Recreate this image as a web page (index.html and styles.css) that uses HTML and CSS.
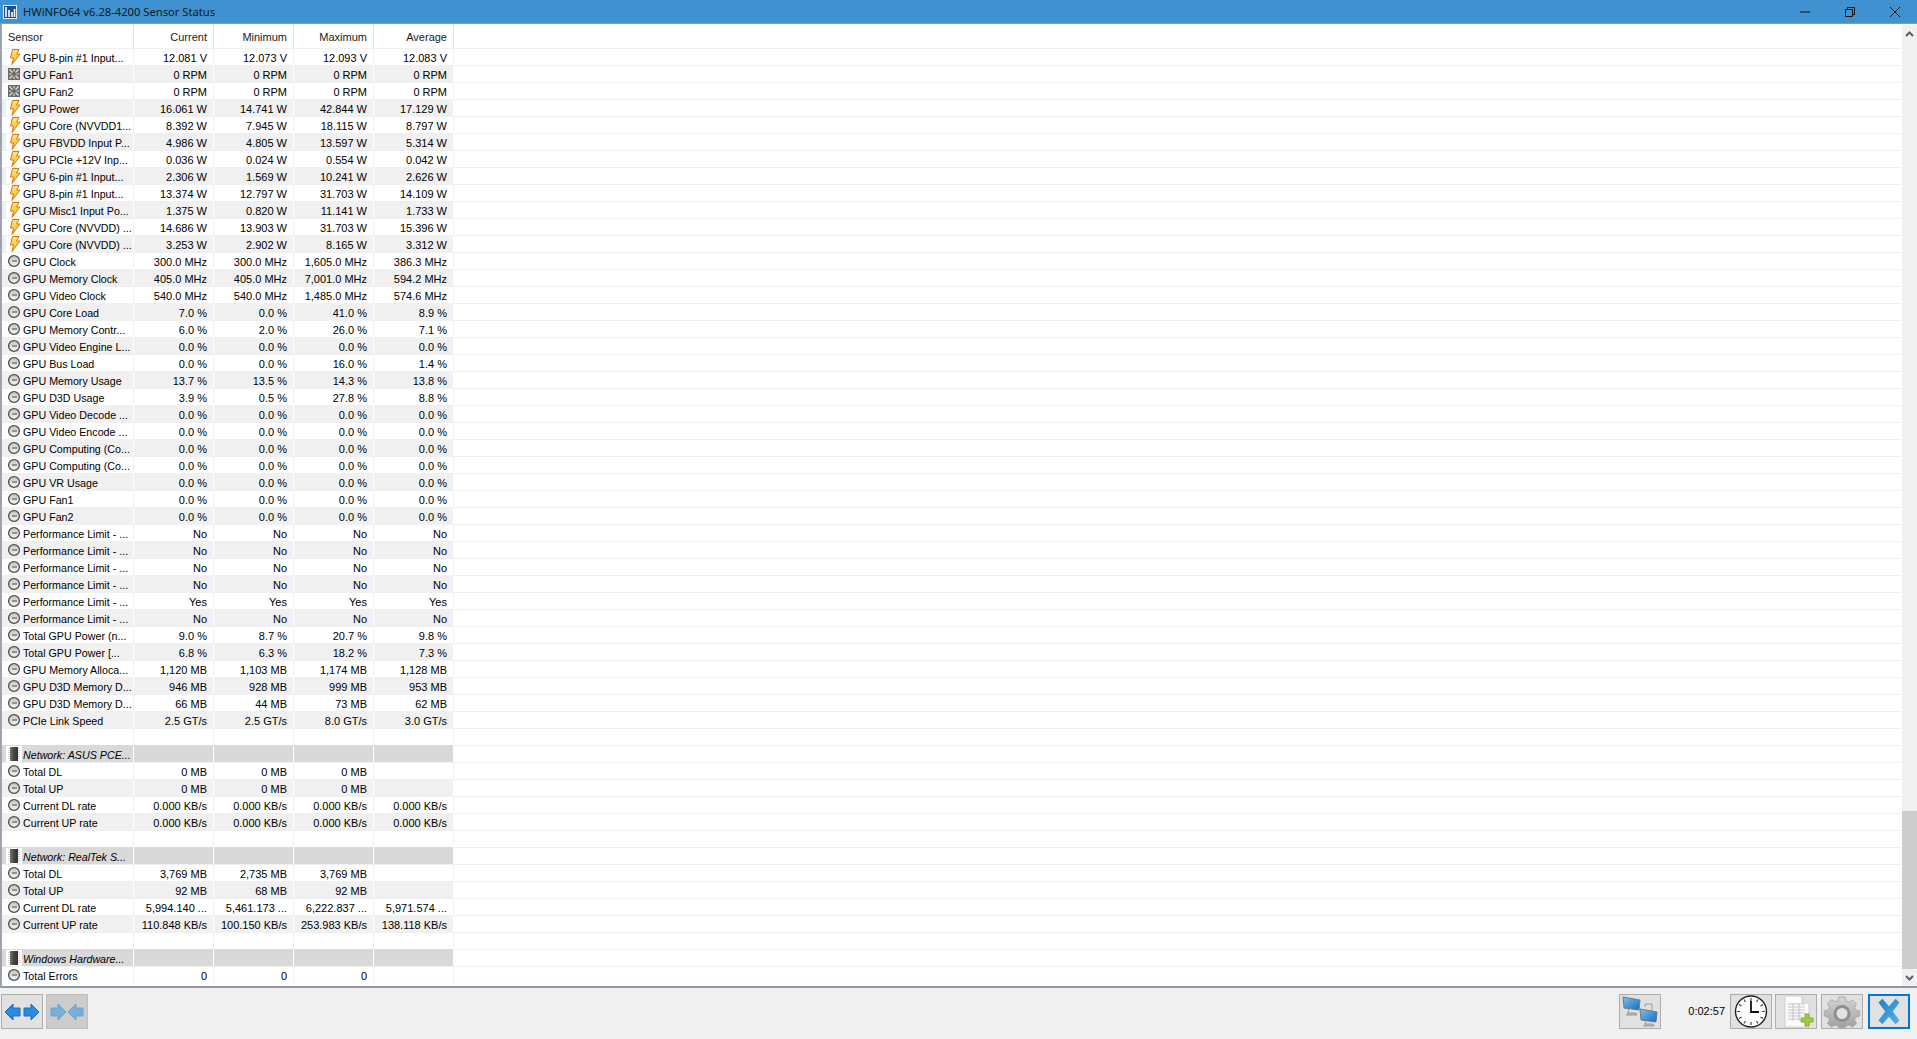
FILE: index.html
```html
<!DOCTYPE html>
<html lang="en">
<head>
  <meta charset="UTF-8" />
  <title>HWiNFO64 v6.28-4200 Sensor Status</title>
  <link rel="stylesheet" href="styles.css">
</head>
<body>

  <!-- Shared sensor icons -->
  <svg class="defs" width="0" height="0">
    <defs>
      <linearGradient id="boltFill" x1="0" y1="0" x2="0" y2="1">
        <stop offset="0" stop-color="#ffe680"/>
        <stop offset="1" stop-color="#f7b51f"/>
      </linearGradient>
      <linearGradient id="gaugeFill" x1="0" y1="0" x2="0" y2="1">
        <stop offset="0" stop-color="#c4c4c4"/>
        <stop offset="1" stop-color="#f6f6f6"/>
      </linearGradient>
      <linearGradient id="chipFill" x1="0" y1="0" x2="1" y2="0">
        <stop offset="0" stop-color="#777"/>
        <stop offset="0.5" stop-color="#444"/>
        <stop offset="1" stop-color="#333"/>
      </linearGradient>
      <linearGradient id="crossFill" x1="0" y1="0" x2="1" y2="1">
        <stop offset="0" stop-color="#1f7fc9"/>
        <stop offset="1" stop-color="#58b2e4"/>
      </linearGradient>
      <linearGradient id="screenFill" x1="0" y1="0" x2="1" y2="1">
        <stop offset="0" stop-color="#7cc3f2"/>
        <stop offset="1" stop-color="#0f6cc0"/>
      </linearGradient>
      <linearGradient id="gearFill" x1="0" y1="0" x2="0" y2="1">
        <stop offset="0" stop-color="#d4d4d4"/>
        <stop offset="1" stop-color="#a0a0a0"/>
      </linearGradient>
      <symbol id="bolt" viewBox="0 0 16 16">
        <path d="M6.500 0.500h6.500L10.500 5H14L6 15.500 7.500 9H4.500z" fill="url(#boltFill)" stroke="#cf7a12" stroke-width="1"/>
      </symbol>
      <symbol id="gauge" viewBox="0 0 16 16">
        <circle cx="8" cy="8" r="5.400" fill="url(#gaugeFill)" stroke="#4e4e4e" stroke-width="1.300"/>
        <path d="M6 8h5" stroke="#555" stroke-width="1.100"/>
      </symbol>
      <symbol id="fan" viewBox="0 0 16 16">
        <rect x="2" y="2" width="12" height="12" fill="#6a6a6a"/>
        <path d="M3.500 3.500l3 3M12.500 3.500l-3 3M3.500 12.500l3-3M12.500 12.500l-3-3M8 3v2.500M8 10.500V13M3 8h2.500M10.500 8H13" stroke="#e8e8e8" stroke-width="1.100"/>
      </symbol>
      <symbol id="chip" viewBox="0 0 16 16">
        <rect x="4" y="1" width="8" height="14" fill="url(#chipFill)"/>
        <path d="M3 2v12M13 2v12" stroke="#aaa" stroke-width="1" stroke-dasharray="1 1"/>
      </symbol>
    </defs>
  </svg>

  <div class="titlebar">
    <svg class="app-icon" viewBox="0 0 14 14">
      <rect x="0.500" y="0.500" width="13" height="13" fill="#1d4f86" stroke="#dfe9f3"/>
      <path d="M3 2v10M6 5v7M9 7v5M11.500 4v8" stroke="#fff" stroke-width="1.600"/>
    </svg>
    <span class="title">HWiNFO64 v6.28-4200 Sensor Status</span>
    <div class="win-btns">
      <span class="win-btn"><svg viewBox="0 0 12 12"><path d="M1 6h10" stroke="#111" stroke-width="1"/></svg></span>
      <span class="win-btn"><svg viewBox="0 0 12 12"><path d="M1.500 3.500h7v7h-7zM3.500 3.500v-2h7v7h-2" fill="none" stroke="#111" stroke-width="1"/></svg></span>
      <span class="win-btn"><svg viewBox="0 0 12 12"><path d="M1 1l10 10M11 1L1 11" stroke="#111" stroke-width="1"/></svg></span>
    </div>
  </div>

  <div class="main">
    <div class="sensors">
      <div class="head">
        <div class="hcell name">Sensor</div>
        <div class="hcell">Current</div>
        <div class="hcell">Minimum</div>
        <div class="hcell">Maximum</div>
        <div class="hcell">Average</div>
      </div>
      <div class="rows">
        <div class="row"><div class="c name"><svg class="ico boxed"><use href="#bolt"/></svg>GPU 8-pin #1 Input...</div><div class="c">12.081 V</div><div class="c">12.073 V</div><div class="c">12.093 V</div><div class="c">12.083 V</div></div>
        <div class="row"><div class="c name"><svg class="ico"><use href="#fan"/></svg>GPU Fan1</div><div class="c">0 RPM</div><div class="c">0 RPM</div><div class="c">0 RPM</div><div class="c">0 RPM</div></div>
        <div class="row"><div class="c name"><svg class="ico"><use href="#fan"/></svg>GPU Fan2</div><div class="c">0 RPM</div><div class="c">0 RPM</div><div class="c">0 RPM</div><div class="c">0 RPM</div></div>
        <div class="row"><div class="c name"><svg class="ico boxed"><use href="#bolt"/></svg>GPU Power</div><div class="c">16.061 W</div><div class="c">14.741 W</div><div class="c">42.844 W</div><div class="c">17.129 W</div></div>
        <div class="row"><div class="c name"><svg class="ico boxed"><use href="#bolt"/></svg>GPU Core (NVVDD1...</div><div class="c">8.392 W</div><div class="c">7.945 W</div><div class="c">18.115 W</div><div class="c">8.797 W</div></div>
        <div class="row"><div class="c name"><svg class="ico boxed"><use href="#bolt"/></svg>GPU FBVDD Input P...</div><div class="c">4.986 W</div><div class="c">4.805 W</div><div class="c">13.597 W</div><div class="c">5.314 W</div></div>
        <div class="row"><div class="c name"><svg class="ico boxed"><use href="#bolt"/></svg>GPU PCIe +12V Inp...</div><div class="c">0.036 W</div><div class="c">0.024 W</div><div class="c">0.554 W</div><div class="c">0.042 W</div></div>
        <div class="row"><div class="c name"><svg class="ico boxed"><use href="#bolt"/></svg>GPU 6-pin #1 Input...</div><div class="c">2.306 W</div><div class="c">1.569 W</div><div class="c">10.241 W</div><div class="c">2.626 W</div></div>
        <div class="row"><div class="c name"><svg class="ico boxed"><use href="#bolt"/></svg>GPU 8-pin #1 Input...</div><div class="c">13.374 W</div><div class="c">12.797 W</div><div class="c">31.703 W</div><div class="c">14.109 W</div></div>
        <div class="row"><div class="c name"><svg class="ico boxed"><use href="#bolt"/></svg>GPU Misc1 Input Po...</div><div class="c">1.375 W</div><div class="c">0.820 W</div><div class="c">11.141 W</div><div class="c">1.733 W</div></div>
        <div class="row"><div class="c name"><svg class="ico boxed"><use href="#bolt"/></svg>GPU Core (NVVDD) ...</div><div class="c">14.686 W</div><div class="c">13.903 W</div><div class="c">31.703 W</div><div class="c">15.396 W</div></div>
        <div class="row"><div class="c name"><svg class="ico boxed"><use href="#bolt"/></svg>GPU Core (NVVDD) ...</div><div class="c">3.253 W</div><div class="c">2.902 W</div><div class="c">8.165 W</div><div class="c">3.312 W</div></div>
        <div class="row"><div class="c name"><svg class="ico"><use href="#gauge"/></svg>GPU Clock</div><div class="c">300.0 MHz</div><div class="c">300.0 MHz</div><div class="c">1,605.0 MHz</div><div class="c">386.3 MHz</div></div>
        <div class="row"><div class="c name"><svg class="ico"><use href="#gauge"/></svg>GPU Memory Clock</div><div class="c">405.0 MHz</div><div class="c">405.0 MHz</div><div class="c">7,001.0 MHz</div><div class="c">594.2 MHz</div></div>
        <div class="row"><div class="c name"><svg class="ico"><use href="#gauge"/></svg>GPU Video Clock</div><div class="c">540.0 MHz</div><div class="c">540.0 MHz</div><div class="c">1,485.0 MHz</div><div class="c">574.6 MHz</div></div>
        <div class="row"><div class="c name"><svg class="ico"><use href="#gauge"/></svg>GPU Core Load</div><div class="c">7.0 %</div><div class="c">0.0 %</div><div class="c">41.0 %</div><div class="c">8.9 %</div></div>
        <div class="row"><div class="c name"><svg class="ico"><use href="#gauge"/></svg>GPU Memory Contr...</div><div class="c">6.0 %</div><div class="c">2.0 %</div><div class="c">26.0 %</div><div class="c">7.1 %</div></div>
        <div class="row"><div class="c name"><svg class="ico"><use href="#gauge"/></svg>GPU Video Engine L...</div><div class="c">0.0 %</div><div class="c">0.0 %</div><div class="c">0.0 %</div><div class="c">0.0 %</div></div>
        <div class="row"><div class="c name"><svg class="ico"><use href="#gauge"/></svg>GPU Bus Load</div><div class="c">0.0 %</div><div class="c">0.0 %</div><div class="c">16.0 %</div><div class="c">1.4 %</div></div>
        <div class="row"><div class="c name"><svg class="ico"><use href="#gauge"/></svg>GPU Memory Usage</div><div class="c">13.7 %</div><div class="c">13.5 %</div><div class="c">14.3 %</div><div class="c">13.8 %</div></div>
        <div class="row"><div class="c name"><svg class="ico"><use href="#gauge"/></svg>GPU D3D Usage</div><div class="c">3.9 %</div><div class="c">0.5 %</div><div class="c">27.8 %</div><div class="c">8.8 %</div></div>
        <div class="row"><div class="c name"><svg class="ico"><use href="#gauge"/></svg>GPU Video Decode ...</div><div class="c">0.0 %</div><div class="c">0.0 %</div><div class="c">0.0 %</div><div class="c">0.0 %</div></div>
        <div class="row"><div class="c name"><svg class="ico"><use href="#gauge"/></svg>GPU Video Encode ...</div><div class="c">0.0 %</div><div class="c">0.0 %</div><div class="c">0.0 %</div><div class="c">0.0 %</div></div>
        <div class="row"><div class="c name"><svg class="ico"><use href="#gauge"/></svg>GPU Computing (Co...</div><div class="c">0.0 %</div><div class="c">0.0 %</div><div class="c">0.0 %</div><div class="c">0.0 %</div></div>
        <div class="row"><div class="c name"><svg class="ico"><use href="#gauge"/></svg>GPU Computing (Co...</div><div class="c">0.0 %</div><div class="c">0.0 %</div><div class="c">0.0 %</div><div class="c">0.0 %</div></div>
        <div class="row"><div class="c name"><svg class="ico"><use href="#gauge"/></svg>GPU VR Usage</div><div class="c">0.0 %</div><div class="c">0.0 %</div><div class="c">0.0 %</div><div class="c">0.0 %</div></div>
        <div class="row"><div class="c name"><svg class="ico"><use href="#gauge"/></svg>GPU Fan1</div><div class="c">0.0 %</div><div class="c">0.0 %</div><div class="c">0.0 %</div><div class="c">0.0 %</div></div>
        <div class="row"><div class="c name"><svg class="ico"><use href="#gauge"/></svg>GPU Fan2</div><div class="c">0.0 %</div><div class="c">0.0 %</div><div class="c">0.0 %</div><div class="c">0.0 %</div></div>
        <div class="row"><div class="c name"><svg class="ico"><use href="#gauge"/></svg>Performance Limit - ...</div><div class="c">No</div><div class="c">No</div><div class="c">No</div><div class="c">No</div></div>
        <div class="row"><div class="c name"><svg class="ico"><use href="#gauge"/></svg>Performance Limit - ...</div><div class="c">No</div><div class="c">No</div><div class="c">No</div><div class="c">No</div></div>
        <div class="row"><div class="c name"><svg class="ico"><use href="#gauge"/></svg>Performance Limit - ...</div><div class="c">No</div><div class="c">No</div><div class="c">No</div><div class="c">No</div></div>
        <div class="row"><div class="c name"><svg class="ico"><use href="#gauge"/></svg>Performance Limit - ...</div><div class="c">No</div><div class="c">No</div><div class="c">No</div><div class="c">No</div></div>
        <div class="row"><div class="c name"><svg class="ico"><use href="#gauge"/></svg>Performance Limit - ...</div><div class="c">Yes</div><div class="c">Yes</div><div class="c">Yes</div><div class="c">Yes</div></div>
        <div class="row"><div class="c name"><svg class="ico"><use href="#gauge"/></svg>Performance Limit - ...</div><div class="c">No</div><div class="c">No</div><div class="c">No</div><div class="c">No</div></div>
        <div class="row"><div class="c name"><svg class="ico"><use href="#gauge"/></svg>Total GPU Power (n...</div><div class="c">9.0 %</div><div class="c">8.7 %</div><div class="c">20.7 %</div><div class="c">9.8 %</div></div>
        <div class="row"><div class="c name"><svg class="ico"><use href="#gauge"/></svg>Total GPU Power [...</div><div class="c">6.8 %</div><div class="c">6.3 %</div><div class="c">18.2 %</div><div class="c">7.3 %</div></div>
        <div class="row"><div class="c name"><svg class="ico"><use href="#gauge"/></svg>GPU Memory Alloca...</div><div class="c">1,120 MB</div><div class="c">1,103 MB</div><div class="c">1,174 MB</div><div class="c">1,128 MB</div></div>
        <div class="row"><div class="c name"><svg class="ico"><use href="#gauge"/></svg>GPU D3D Memory D...</div><div class="c">946 MB</div><div class="c">928 MB</div><div class="c">999 MB</div><div class="c">953 MB</div></div>
        <div class="row"><div class="c name"><svg class="ico"><use href="#gauge"/></svg>GPU D3D Memory D...</div><div class="c">66 MB</div><div class="c">44 MB</div><div class="c">73 MB</div><div class="c">62 MB</div></div>
        <div class="row"><div class="c name"><svg class="ico"><use href="#gauge"/></svg>PCIe Link Speed</div><div class="c">2.5 GT/s</div><div class="c">2.5 GT/s</div><div class="c">8.0 GT/s</div><div class="c">3.0 GT/s</div></div>
        <div class="row blank"><div class="c name"></div><div class="c"></div><div class="c"></div><div class="c"></div><div class="c"></div></div>
        <div class="row section"><div class="c name"><svg class="ico boxed"><use href="#chip"/></svg>Network: ASUS PCE...</div><div class="c"></div><div class="c"></div><div class="c"></div><div class="c"></div></div>
        <div class="row"><div class="c name"><svg class="ico"><use href="#gauge"/></svg>Total DL</div><div class="c">0 MB</div><div class="c">0 MB</div><div class="c">0 MB</div><div class="c"></div></div>
        <div class="row"><div class="c name"><svg class="ico"><use href="#gauge"/></svg>Total UP</div><div class="c">0 MB</div><div class="c">0 MB</div><div class="c">0 MB</div><div class="c"></div></div>
        <div class="row"><div class="c name"><svg class="ico"><use href="#gauge"/></svg>Current DL rate</div><div class="c">0.000 KB/s</div><div class="c">0.000 KB/s</div><div class="c">0.000 KB/s</div><div class="c">0.000 KB/s</div></div>
        <div class="row"><div class="c name"><svg class="ico"><use href="#gauge"/></svg>Current UP rate</div><div class="c">0.000 KB/s</div><div class="c">0.000 KB/s</div><div class="c">0.000 KB/s</div><div class="c">0.000 KB/s</div></div>
        <div class="row blank"><div class="c name"></div><div class="c"></div><div class="c"></div><div class="c"></div><div class="c"></div></div>
        <div class="row section"><div class="c name"><svg class="ico boxed"><use href="#chip"/></svg>Network: RealTek S...</div><div class="c"></div><div class="c"></div><div class="c"></div><div class="c"></div></div>
        <div class="row"><div class="c name"><svg class="ico"><use href="#gauge"/></svg>Total DL</div><div class="c">3,769 MB</div><div class="c">2,735 MB</div><div class="c">3,769 MB</div><div class="c"></div></div>
        <div class="row"><div class="c name"><svg class="ico"><use href="#gauge"/></svg>Total UP</div><div class="c">92 MB</div><div class="c">68 MB</div><div class="c">92 MB</div><div class="c"></div></div>
        <div class="row"><div class="c name"><svg class="ico"><use href="#gauge"/></svg>Current DL rate</div><div class="c">5,994.140 ...</div><div class="c">5,461.173 ...</div><div class="c">6,222.837 ...</div><div class="c">5,971.574 ...</div></div>
        <div class="row"><div class="c name"><svg class="ico"><use href="#gauge"/></svg>Current UP rate</div><div class="c">110.848 KB/s</div><div class="c">100.150 KB/s</div><div class="c">253.983 KB/s</div><div class="c">138.118 KB/s</div></div>
        <div class="row blank"><div class="c name"></div><div class="c"></div><div class="c"></div><div class="c"></div><div class="c"></div></div>
        <div class="row section"><div class="c name"><svg class="ico boxed"><use href="#chip"/></svg>Windows Hardware...</div><div class="c"></div><div class="c"></div><div class="c"></div><div class="c"></div></div>
        <div class="row"><div class="c name"><svg class="ico"><use href="#gauge"/></svg>Total Errors</div><div class="c">0</div><div class="c">0</div><div class="c">0</div><div class="c"></div></div>
      </div>
    </div>

    <div class="scrollbar">
      <div class="sb-btn"><svg viewBox="0 0 9 6"><path d="M1 5l3.500-3.500L8 5" fill="none" stroke="#606060" stroke-width="2"/></svg></div>
      <div class="sb-track"><div class="sb-thumb"></div></div>
      <div class="sb-btn"><svg viewBox="0 0 9 6"><path d="M1 1l3.500 3.500L8 1" fill="none" stroke="#606060" stroke-width="2"/></svg></div>
    </div>
  </div>

  <div class="toolbar">
    <button class="tool arrows">
      <svg viewBox="0 0 40 20"><path d="M3 10l8-8v4h7v8h-7v4z" fill="#2b8be0" stroke="#1b6fc0"/><path d="M37 10l-8-8v4h-7v8h7v4z" fill="#2b8be0" stroke="#1b6fc0"/></svg>
    </button>
    <button class="tool arrows off">
      <svg viewBox="0 0 40 20"><path d="M19 10l-8-8v4H4v8h7v4z" fill="#79aedb" stroke="#6ea3d0"/><path d="M21 10l8-8v4h7v8h-7v4z" fill="#79aedb" stroke="#6ea3d0"/></svg>
    </button>
    <button class="tool push">
      <svg viewBox="0 0 40 33">
        <path d="M25 12v-3h7v10" fill="none" stroke="#999"/>
        <path d="M3 2l17 3-1 10-15-2z" fill="url(#screenFill)" stroke="#777"/>
        <path d="M9 14l-1 4h8l1 2H6" fill="#bbb" stroke="#999"/>
        <path d="M20 14l17 3-1 10-15-2z" fill="url(#screenFill)" stroke="#777"/>
        <path d="M26 26l-1 3h8l1 2H23" fill="#bbb" stroke="#999"/>
      </svg>
    </button>
    <span class="elapsed">0:02:57</span>
    <button class="tool">
      <svg viewBox="0 0 40 33">
        <circle cx="20" cy="16.500" r="15.500" fill="#fff" stroke="#222" stroke-width="1.400"/>
        <path d="M20 3v3M20 27v3M6 16.500h3M31 16.500h3M13 4.500l1.500 2.500M27 4.500l-1.500 2.500M8 9.500l2.500 1.500M32 9.500L29.500 11M8 23.500l2.500-1.500M32 23.500L29.500 22M13 28.500l1.500-2.500M27 28.500L25.500 26" stroke="#444" stroke-width="1.200"/>
        <path d="M20 6v11h8" fill="none" stroke="#111" stroke-width="1.800"/>
      </svg>
    </button>
    <button class="tool">
      <svg viewBox="0 0 40 33">
        <path d="M9 1h17l7 7v24H9z" fill="#fbfbfb" stroke="#cfcfcf"/>
        <path d="M26 1v7h7" fill="#ddd" stroke="#cfcfcf"/>
        <path d="M12 9h17M12 12h17M12 15h17M12 18h17M12 21h14M12 24h12M17 8v18M23 8v18" stroke="#c4c4c4" stroke-width="1"/>
        <path d="M29 19h4v4h4v4h-4v4h-4v-4h-4v-4h4z" fill="#9ccb4a" stroke="#7fae35"/>
      </svg>
    </button>
    <button class="tool gear">
      <svg viewBox="0 0 40 33">
        <path d="M17 2h6l1 4 3 1.200 3.500-2 4 4-2 3.500L33.700 15l4 1v5l-4 1-1.200 3 2 3.500-4 3.500-3.500-2-3 1.200-1 1.800h-6l-1-1.800-3-1.200-3.500 2-4-3.500 2-3.500L6.300 22l-4-1v-5l4-1 1.200-2.800-2-3.500 4-4 3.500 2L16 6z" fill="url(#gearFill)" stroke="#aaa"/>
        <circle cx="20" cy="18.500" r="7" fill="#e2e2e2" stroke="#8f8f8f" stroke-width="3"/>
      </svg>
    </button>
    <button class="tool close">
      <svg viewBox="0 0 40 33"><path d="M9 7l4-4 7 8 7-8 4 4-7 9.500 7 9.500-4 4-7-8-7 8-4-4 7-9.500z" fill="url(#crossFill)"/></svg>
    </button>
  </div>

</body>
</html>
```

FILE: styles.css
```css
* { box-sizing: border-box; }
html, body {
  margin: 0;
  height: 100%;
  overflow: hidden;
}
body {
  display: flex;
  flex-direction: column;
  font-family: "Liberation Sans", Arial, sans-serif;
  font-size: 11px;
  color: #000;
  background: #f0f0f0;
}
.defs { position: absolute; }

.titlebar {
  display: flex;
  align-items: center;
  height: 24px;
  padding-left: 3px;
  background: #3f92cf;
  border-bottom: 1px solid #8d9aa5;
}
.app-icon {
  width: 14px;
  height: 14px;
  margin-right: 6px;
}
.title {
  font-family: "Noto Sans", sans-serif;
  font-size: 11.2px;
  color: #0c1a26;
}
.win-btns {
  display: flex;
  margin-left: auto;
}
.win-btn {
  display: flex;
  justify-content: center;
  align-items: center;
  width: 45px;
  height: 23px;
}
.win-btn svg {
  width: 12px;
  height: 12px;
}

.main {
  display: flex;
  flex: 1;
  min-height: 0;
  background: #fff;
  border-left: 2px solid #9aa5b0;
  border-bottom: 2px solid #8d9aa5;
}
.sensors {
  flex: 1;
  min-width: 0;
}
.head, .row {
  display: grid;
  grid-template-columns: 132px 80px 80px 80px 80px;
}
.head { height: 24px; }
.hcell {
  padding: 2px 6px 0 0;
  line-height: 22px;
  text-align: right;
  color: #222;
  border-right: 1px solid #e4e4e4;
}
.hcell.name {
  padding-left: 6px;
  text-align: left;
}

.row {
  height: 17px;
  border-top: 1px solid #f0f0f0;
}
.c {
  height: 17px;
  margin-top: -1px;
  padding-right: 6px;
  line-height: 21px;
  text-align: right;
  white-space: nowrap;
  overflow: hidden;
  border-right: 1px solid #f0f0f0;
}
.c.name {
  display: flex;
  align-items: flex-start;
  padding: 0;
  font-size: 10.700px;
  text-align: left;
}
.rows .row:nth-child(even) .c {
  background: #f0f0f0;
  border-right-color: #fff;
}
.rows .row.section .c {
  background: #d9d9d9;
  border-right-color: #fff;
}
.rows .row.section .c.name { font-style: italic; }
.ico {
  flex: none;
  width: 16px;
  height: 16px;
  margin: 1px 1px 0 4px;
}
.ico.boxed { background: #fff; }

.scrollbar {
  display: flex;
  flex-direction: column;
  flex: none;
  width: 15px;
  margin-top: 1px;
  background: #f0f0f0;
}
.sb-btn {
  display: flex;
  justify-content: center;
  align-items: center;
  height: 17px;
}
.sb-btn svg {
  width: 9px;
  height: 6px;
}
.sb-track {
  display: flex;
  flex-direction: column;
  justify-content: flex-end;
  flex: 1;
}
.sb-thumb {
  height: 158px;
  background: #cdcdcd;
}

.toolbar {
  display: flex;
  align-items: flex-start;
  gap: 3px;
  height: 51px;
  padding: 6px 7px 0 1px;
  background: #f0f0f0;
}
.tool {
  display: flex;
  justify-content: center;
  align-items: center;
  width: 42px;
  height: 35px;
  margin: 0;
  padding: 0;
  background: #e1e1e1;
  border: 1px solid #adadad;
}
.tool svg {
  width: 40px;
  height: 33px;
}
.tool.arrows svg { height: 20px; }
.tool.off {
  background: #cccccc;
  border-color: #bfbfbf;
}
.tool.push { margin-left: auto; }
.elapsed {
  width: 63px;
  padding-right: 2px;
  line-height: 35px;
  text-align: right;
}
.tool.gear { margin-left: 1px; }
.tool.close {
  margin-left: 2px;
  border: 2px solid #0078d7;
}
```
